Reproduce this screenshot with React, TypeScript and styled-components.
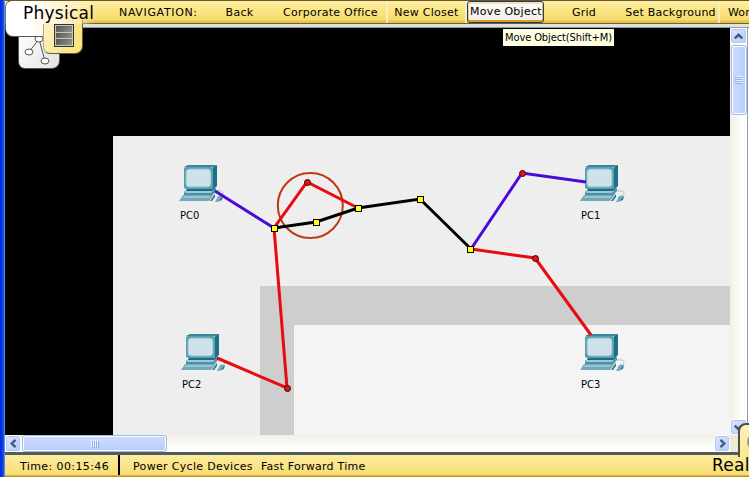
import React from "react";
import styled, { createGlobalStyle, css } from "styled-components";

const GlobalStyle = createGlobalStyle`
  * { box-sizing: border-box; }
  html, body { margin: 0; overflow: hidden; background: #000; }
  body { font-family: "DejaVu Sans", sans-serif; color: #000; }
`;

const Frame = styled.div`
  width: 749px;
  height: 477px;
  padding-left: 5px;
  overflow: hidden;
  background: linear-gradient(90deg, #0025d4 0, #0a45ee 3px, #2b62e8 4px, #86aef0 5px);
`;

const Window = styled.div`
  position: relative;
  display: flex;
  flex-direction: column;
  width: 744px;
  height: 477px;
  overflow: hidden;
`;

const Toolbar = styled.nav`
  display: grid;
  grid-template-columns: 100px 99px 71px 113px 79px 78px 78px 97px 29px;
  flex: none;
  height: 24px;
  border-top: 1px solid #6b5a20;
  border-bottom: 1px solid #75601f;
  background: linear-gradient(#fff0ad 0, #fce991 20%, #f9dd70 82%, #dcbb48 100%);
`;

const label = css<{ $spacing?: number }>`
  font-size: 11px;
  line-height: 23px;
  white-space: nowrap;
  letter-spacing: ${(p) => p.$spacing ?? 0}px;
`;

const ToolItem = styled.span<{ $spacing?: number; $divided?: boolean; $pad?: number }>`
  ${label}
  height: 22px;
  text-align: ${(p) => (p.$pad ? "left" : "center")};
  padding-left: ${(p) => p.$pad ?? 0}px;
  border-right: ${(p) => (p.$divided ? "2px solid #f9eec1" : "0")};
`;

const ActiveTool = styled.button<{ $spacing?: number }>`
  ${label}
  justify-self: start;
  width: 77px;
  height: 22px;
  margin: 0;
  padding: 0 0 0 1px;
  line-height: 20px;
  font-family: inherit;
  color: #000;
  text-align: center;
  border: 1px solid #183d70;
  border-radius: 3px;
  background: linear-gradient(#fdfdfb, #efeeea);
  box-shadow: inset 0 2px #fbe0b4, inset 0 -2px #e79a21, inset 1px 0 #f8cd86, inset -1px 0 #f0b54f;
`;

const Ledge = styled.div`
  flex: none;
  height: 4px;
  background: #e0e3df;
  border-bottom: 1px solid #8c9aa3;
`;

const Workspace = styled.main`
  display: grid;
  grid-template-columns: 725px 17px 2px;
  grid-template-rows: 407px 17px;
  flex: none;
  height: 424px;
  background: #f2f0e9;
`;

const Canvas = styled.svg`
  display: block;
  background: #000;
`;

const Track = styled.div<{ $vertical?: boolean }>`
  display: flex;
  flex-direction: ${(p) => (p.$vertical ? "column" : "row")};
  background: linear-gradient(${(p) => (p.$vertical ? "90deg" : "180deg")}, #f1f0e8, #fefefc 75%);
`;

const ScrollButton = styled.div<{ $last?: boolean; $vertical?: boolean }>`
  display: flex;
  align-items: center;
  justify-content: center;
  flex: none;
  width: ${(p) => (p.$vertical ? 17 : 16)}px;
  height: ${(p) => (p.$vertical ? 16 : 17)}px;
  margin-left: ${(p) => (p.$last && !p.$vertical ? "auto" : "0")};
  margin-top: ${(p) => (p.$last && p.$vertical ? "auto" : "0")};
  border: 1px solid #fff;
  border-radius: 3px;
  box-shadow: inset 0 0 0 1px #b2c7f1;
  background: linear-gradient(135deg, #dce7ff, #b5cafa);
`;

const Thumb = styled.div<{ $vertical?: boolean }>`
  display: flex;
  align-items: center;
  justify-content: center;
  flex: none;
  ${(p) =>
    p.$vertical
      ? css`width: 16px; height: 70px; margin: 1px 0 0 1px;`
      : css`width: 145px; height: 17px; margin-left: 1px;`}
  border: 1px solid #a3baE0;
  border-radius: 3px;
  box-shadow: inset 0 0 0 1px #fff;
  background: linear-gradient(${(p) => (p.$vertical ? "90deg" : "180deg")}, #cddcff, #b9cdfc);
`;

const FrameEdge = styled.div`
  grid-row: span 2;
  border-left: 1px solid #8aa2bd;
  background: #fff;
`;

const Corner = styled.div`
  background: #ece9d8;
`;

const StatusBar = styled.footer`
  display: flex;
  flex: none;
  height: 25px;
  border-top: 3px solid #515c5b;
  border-bottom: 1px solid #bb9624;
  background: linear-gradient(#fdec9e, #fbe389 50%, #f8dc70);
  box-shadow: inset 0 -1px #d9b343;
`;

const StatusText = styled.span<{ $spacing?: number; $width: number; $pad: number; $rule?: boolean }>`
  ${label}
  width: ${(p) => p.$width}px;
  height: 20px;
  padding-left: ${(p) => p.$pad}px;
  border-right: ${(p) => (p.$rule ? "2px solid #000" : "0")};
`;

const LogicalTab = styled.div`
  position: absolute;
  left: 13px;
  top: 26px;
  width: 42px;
  height: 43px;
  border: 1px solid #555;
  border-radius: 0 0 8px 7px;
  background: linear-gradient(120deg, #fff, #e2e2e2);
`;

const PhysicalTab = styled.div`
  position: absolute;
  left: 0;
  top: 0;
  width: 94px;
  height: 24px;
  background: linear-gradient(100deg, #fff 30%, #fdf3cc 62%, rgba(252, 233, 145, 0) 96%);
  border-top: 1px solid #6b5a20;
  border-left: 1px solid #777;
  border-radius: 7px 0 0 0;
`;

const PhysicalTail = styled.div`
  position: absolute;
  left: 0;
  top: 20px;
  width: 41px;
  height: 17px;
  background: linear-gradient(90deg, #fff 60%, #fdf9ea);
  border: 1px solid #56564e;
  border-top: 0;
  border-radius: 0 0 5px 8px;
`;

const RackTab = styled.div`
  position: absolute;
  left: 38px;
  top: 20px;
  width: 40px;
  height: 34px;
  border: 1px solid #675b37;
  border-top: 0;
  border-left-color: #b5aa83;
  border-radius: 0 0 8px 7px;
  background: linear-gradient(110deg, #fcf2c9, #fae480 80%);
`;

const RackIcon = styled.div`
  position: absolute;
  left: 49px;
  top: 24px;
  display: grid;
  grid-template-rows: repeat(3, 1fr);
  gap: 1px;
  width: 20px;
  height: 23px;
  padding: 1px;
  border: 1px solid #35332f;
  background: #c6c6c0;
`;

const Shelf = styled.i`
  background: linear-gradient(135deg, #55524f, #969591);
`;

const TabTitle = styled.h1`
  position: absolute;
  left: 18px;
  top: 2px;
  margin: 0;
  font-size: 17px;
  font-weight: 400;
  line-height: 22px;
  letter-spacing: 0.25px;
`;

const Tooltip = styled.div`
  position: absolute;
  left: 498px;
  top: 29px;
  width: 111px;
  height: 17px;
  padding-left: 2px;
  background: #ffffe1;
  font-family: "DejaVu Sans Condensed", "DejaVu Sans", sans-serif;
  font-size: 11px;
  font-stretch: condensed;
  line-height: 17px;
  letter-spacing: -0.1px;
  white-space: nowrap;
`;

const RealtimeTab = styled.div`
  position: absolute;
  left: 733px;
  top: 423px;
  width: 20px;
  height: 34px;
  border: 2px solid #4f4f3e;
  border-right: 0;
  border-bottom: 0;
  border-radius: 8px 0 0 0;
  background: linear-gradient(#fdf1bd, #fce891);
  overflow: hidden;
`;

const ClockDial = styled.div`
  width: 18px;
  height: 18px;
  margin: 8px 0 0 7px;
  border: 2px solid #999787;
  border-radius: 50%;
  background: #eee;
`;

const RealtimeTitle = styled(TabTitle)`
  left: 707px;
  top: 454px;
`;

function Chevron({ d }: { d: string }) {
  return (
    <svg width="9" height="9" viewBox="0 0 9 9">
      <path d={d} fill="none" stroke="#405a86" strokeWidth="2.4" />
    </svg>
  );
}

function Grip({ vertical }: { vertical?: boolean }) {
  return (
    <svg width="8" height="8" viewBox="0 0 8 8" shapeRendering="crispEdges">
      <g transform={vertical ? "rotate(90 4 4)" : undefined}>
        <path d="M.5 0v7M2.5 0v7M4.5 0v7M6.5 0v7" stroke="#eef4fe" />
        <path d="M1.5 1v7M3.5 1v7M5.5 1v7M7.5 1v7" stroke="#8fabed" />
      </g>
    </svg>
  );
}

function Computer({ x, y, name }: { x: number; y: number; name: string }) {
  return (
    <g transform={`translate(${x} ${y})`}>
      <path d="M5 2l4-2h29l-4 2z" fill="#3a8597" />
      <path d="M34 2l4-2v21l-4 3z" fill="#1b7286" />
      <rect x="5" y="2" width="29" height="22" rx="2" fill="#579eb1" />
      <rect x="7" y="4" width="25" height="18" rx="3" fill="#cfe2e9" stroke="#8bbcca" />
      <path d="M8 24h24l5-2-4 5H6z" fill="#1b6d82" />
      <path d="M5 26h28l4-3v3l-4 4H5z" fill="#4a91a5" />
      <path d="M5 26h28l2-1-3 3H6z" fill="#a0c8d4" />
      <path d="M4 30h29l3-2-6 8H0z" fill="#72aabb" />
      <path d="M31 36l5-7v3l-3 4z" fill="#287589" />
      <path d="M5 31h27l-2 2H3z" fill="#9bc4d0" />
      <path d="M37 26q8-1 7 3-1 2-4 2" fill="none" stroke="#a8c5cf" />
      <path d="M39 31h5l-2 4-3 2h-3z" fill="#76acbc" />
      <path d="M41 34l3-3-1 4-3 1z" fill="#347c90" />
      <text x="1" y="54" fontSize="11" fontFamily="DejaVu Sans Condensed, DejaVu Sans, sans-serif">{name}</text>
    </g>
  );
}

const computers = [
  { name: "PC0", x: 179, y: 165 },
  { name: "PC1", x: 580, y: 165 },
  { name: "PC2", x: 181, y: 334 },
  { name: "PC3", x: 580, y: 334 },
];

const cables = [
  { points: "215,191 274,228", color: "#4b08d9" },
  { points: "471,249 522,173 586,182", color: "#4b08d9" },
  { points: "358,208 307,182 274,228 287,388 217,358", color: "#e80c10" },
  { points: "471,249 535,258 591,335", color: "#e80c10" },
  { points: "274,228 316,222 358,208 420,199 471,249", color: "#000" },
];

const joints = [[274, 228], [316, 222], [358, 208], [420, 199], [470, 249]];
const bends = [[307, 182], [522, 173], [535, 258], [287, 388]];

function NetworkMap() {
  return (
    <Canvas width="725" height="407" viewBox="5 28 725 407">
      <rect x="113" y="136" width="617" height="299" fill="#eee" />
      <path d="M260 286h470v39H294v110h-34z" fill="#cecece" />
      <rect x="294" y="325" width="436" height="110" fill="#f4f4f4" />
      <circle cx="310.3" cy="205.5" r="32.5" fill="none" stroke="#bd3a14" strokeWidth="2" />
      {computers.map((c) => <Computer key={c.name} {...c} />)}
      {cables.map((c) => (
        <polyline key={c.points} points={c.points} fill="none" stroke={c.color} strokeWidth="3" />
      ))}
      {joints.map(([x, y]) => (
        <rect key={x} x={x - 2.5} y={y - 2.5} width="6" height="6" fill="#ffff18" stroke="#000" />
      ))}
      {bends.map(([x, y]) => (
        <circle key={x} cx={x + 0.5} cy={y + 0.5} r="3" fill="#df1517" stroke="#400" />
      ))}
    </Canvas>
  );
}

export default function App() {
  return (
    <Frame>
      <GlobalStyle />
      <Window>
        <Toolbar>
          <span />
          <ToolItem $pad={14} $spacing={0.65}>NAVIGATION:</ToolItem>
          <ToolItem $spacing={0.3}>Back</ToolItem>
          <ToolItem $spacing={0.25} $divided>Corporate Office</ToolItem>
          <ToolItem $spacing={0.25} $divided>New Closet</ToolItem>
          <ActiveTool $spacing={0.27}>Move Object</ActiveTool>
          <ToolItem $spacing={0.2}>Grid</ToolItem>
          <ToolItem $spacing={0.25} $divided>Set Background</ToolItem>
          <ToolItem $pad={8} $spacing={0.1}>Wor</ToolItem>
        </Toolbar>
        <Ledge />
        <Workspace>
          <NetworkMap />
          <Track $vertical>
            <ScrollButton $vertical><Chevron d="M.8 6.5l3.7-3.7 3.7 3.7" /></ScrollButton>
            <Thumb $vertical><Grip vertical /></Thumb>
            <ScrollButton $vertical $last><Chevron d="M.8 2.5l3.7 3.7 3.7-3.7" /></ScrollButton>
          </Track>
          <FrameEdge />
          <Track>
            <ScrollButton><Chevron d="M6.5.8L2.8 4.5l3.7 3.7" /></ScrollButton>
            <Thumb><Grip /></Thumb>
            <ScrollButton $last><Chevron d="M2.5.8l3.7 3.7-3.7 3.7" /></ScrollButton>
          </Track>
          <Corner />
        </Workspace>
        <StatusBar>
          <StatusText $width={115} $pad={15} $spacing={0.4} $rule>Time: 00:15:46</StatusText>
          <StatusText $width={141} $pad={13} $spacing={0.33}>Power Cycle Devices</StatusText>
          <StatusText $width={150} $pad={0} $spacing={0.25}>Fast Forward Time</StatusText>
        </StatusBar>
        <LogicalTab>
          <svg width="40" height="42" viewBox="0 0 40 42" fill="#fff" stroke="#555">
            <path d="M20 12L10 25M20 12l6 22" />
            <ellipse cx="20" cy="12" rx="4" ry="3" />
            <ellipse cx="10" cy="25" rx="4" ry="3" />
            <ellipse cx="26" cy="34" rx="4" ry="3" />
          </svg>
        </LogicalTab>
        <PhysicalTail />
        <RackTab />
        <PhysicalTab />
        <RackIcon><Shelf /><Shelf /><Shelf /></RackIcon>
        <TabTitle>Physical</TabTitle>
        <Tooltip>Move Object(Shift+M)</Tooltip>
        <RealtimeTab><ClockDial /></RealtimeTab>
        <RealtimeTitle>Real</RealtimeTitle>
      </Window>
    </Frame>
  );
}
